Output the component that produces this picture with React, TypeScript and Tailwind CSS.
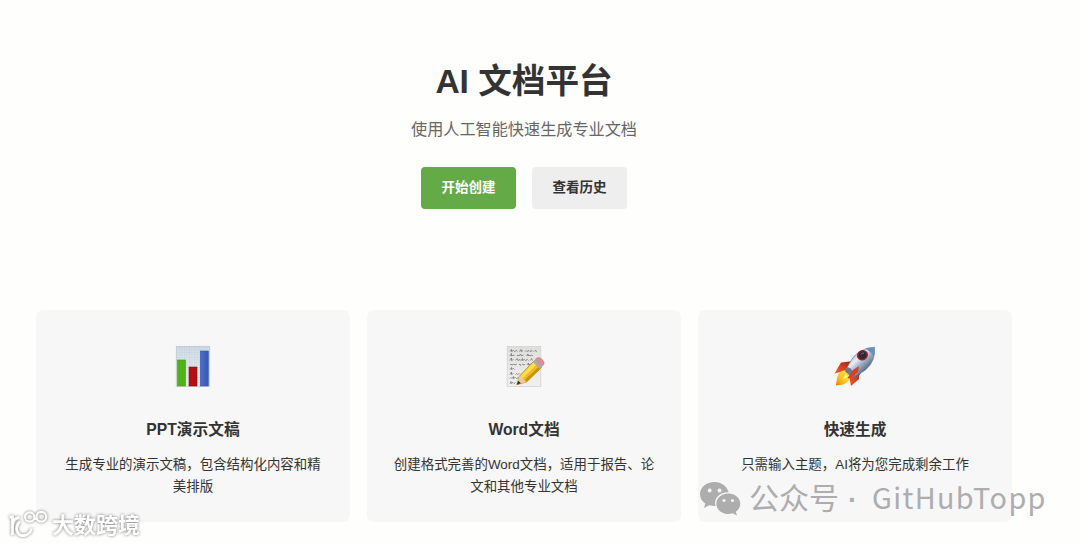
import type { ReactNode } from "react";

function ChartIcon() {
  return (
    <svg viewBox="0 0 48 48" className="size-12">
      <defs>
        <linearGradient id="paper" x1="0" y1="0" x2="0" y2="1">
          <stop offset="0" stopColor="#d3dbe4" />
          <stop offset="1" stopColor="#f1f5fa" />
        </linearGradient>
        <linearGradient id="blueBar" x1="0" y1="0" x2="1" y2="0">
          <stop offset="0" stopColor="#4a70cf" />
          <stop offset="1" stopColor="#3557b8" />
        </linearGradient>
        <pattern id="grid" width="2.5" height="2.5" patternUnits="userSpaceOnUse">
          <path d="M0 0H2.5M0 0V2.5" stroke="#b9cbdc" strokeWidth=".6" />
        </pattern>
      </defs>
      <rect x="7" y="4" width="34" height="40.5" fill="url(#paper)" />
      <rect x="7" y="4" width="34" height="40.5" fill="url(#grid)" />
      <rect x="7.3" y="4.3" width="33.4" height="40" fill="none" stroke="#c3cad2" strokeWidth=".8" />
      <rect x="8.5" y="18" width="8" height="26" fill="#4eb413" stroke="#419b10" strokeWidth=".6" />
      <rect x="20" y="25" width="8" height="19" fill="#b80d12" stroke="#8d0c10" strokeWidth=".6" />
      <rect x="31.3" y="9" width="8" height="35" fill="url(#blueBar)" stroke="#3454a9" strokeWidth=".6" />
    </svg>
  );
}

function MemoIcon() {
  return (
    <svg viewBox="0 0 48 48" className="size-12">
      <defs>
        <linearGradient id="memoPaper" x1="0" y1="0" x2="0" y2="1">
          <stop offset="0" stopColor="#dededc" />
          <stop offset="1" stopColor="#f0f0ee" />
        </linearGradient>
      </defs>
      <rect x="7.2" y="4.4" width="33.6" height="40" fill="url(#memoPaper)" stroke="#d2d2d0" strokeWidth=".8" />
      <g fill="none" stroke="#555" strokeWidth=".6">
        <path d="M10 9.5l1.500-2v2l2-1 1 1 2-1 1 1m2 0 1.500-2v2l2-1m2 1 1-1 1 1 2-1 1 1 2-1 1 1m1 0 1-1 2 1" />
        <path d="M10 14l1.500-2.500v2.500l2-1 1 1m2.500 0 1-1 1 1 1.500-2 1 2 2-1m3 1 1.500-2v2l1-1 1 1 2-1 1 1" />
        <path d="M10 18.500l1.500-2.500v2.500l2-1m2 1 1.500-2 1 2 2-1 1 1 1.500-2v2l2-1 1 1 2-1 1 1m2 0 1-2 1 2" />
        <path d="M10 23l1-1 1 1 2-1 1 1 2-1m2 1 1-1 1 2m1-2 2 1 1-1m2 1 1.500-2v2l2-1" />
        <path d="M10 27.500l1.500-2v2l2-1 1 1m-4.500 5 1.500-2.500v2.500l2-1m2 1 1-1 1 1 2-1" />
        <path d="M10 36.500l1-1 1 1 1.500-2v2l2-1 1 1 2-1m-8.500 6 1-2v2l2-1 1 1 1.500-1" />
      </g>
      <g transform="translate(-1.5 0)">
        <path d="M18.3 42.7L21 34 36 18.500 43 25.500 28 40Z" fill="#f0bd20" stroke="#a67a18" strokeWidth=".7" />
        <path d="M22 34L36.500 19 39 21.500 24.500 36Z" fill="#ffdf48" />
        <path d="M26 38L41.500 23.500 43 25.500 28 40Z" fill="#cc920c" />
        <path d="M18.3 42.7L21 34 24 35 25.500 38 28 40Z" fill="#edc994" />
        <path d="M18.3 42.7L19.600 38.7 22.500 41.300Z" fill="#33302d" />
        <path d="M34.500 20L37 17.300 44 24 41.300 27Z" fill="#a9aba9" />
        <path d="M37 17.300L38.200 16Q40.500 14.500 43.700 17.500T45 22.800L44 24Z" fill="#e58b90" stroke="#c76d76" strokeWidth=".5" />
      </g>
    </svg>
  );
}

function RocketIcon() {
  return (
    <svg viewBox="0 0 48 48" className="size-12">
      <defs>
        <linearGradient id="hull" x1=".2" y1=".15" x2=".8" y2=".8">
          <stop offset="0" stopColor="#718da9" />
          <stop offset=".35" stopColor="#e9f0f6" />
          <stop offset=".6" stopColor="#9aafc6" />
          <stop offset="1" stopColor="#3b4e68" />
        </linearGradient>
        <linearGradient id="flame" x1="1" y1="0" x2="0" y2="1">
          <stop offset="0" stopColor="#fff15b" />
          <stop offset=".6" stopColor="#ffc414" />
          <stop offset="1" stopColor="#f47416" />
        </linearGradient>
        <linearGradient id="fin" x1="0" y1="1" x2="1" y2="0">
          <stop offset="0" stopColor="#ff5d27" />
          <stop offset="1" stopColor="#a51713" />
        </linearGradient>
      </defs>
      <path d="M23 19L10 20.500 3.500 31.500 17 28Z" fill="url(#fin)" />
      <path d="M32 27L28 34 28 37 20 44 18.500 36Z" fill="url(#fin)" />
      <path d="M15 28Q8 29 6.500 34L4.800 43.500Q13 43 16.500 40L20 34Z" fill="url(#flame)" />
      <path d="M15 32L11 38 17 35Z" fill="#fff58b" />
      <path d="M14 29L18.500 21Q26 6 43.500 5.300Q45 19 34.500 28L22 36Z" fill="url(#hull)" stroke="#576c82" strokeWidth=".5" />
      <path d="M34 6.700Q39 5 43.500 5.300Q44.300 10 42.500 15Q40 9 34 6.700Z" fill="#6790bd" />
      <path d="M14 29L16.500 25Q22 27 24.500 34.500L22 36Z" fill="#69788b" />
      <path d="M28 24L22 28 16.500 36 19 36.500 27 30Z" fill="#e13b22" />
      <ellipse cx="31.5" cy="13.2" rx="5.7" ry="5.1" transform="rotate(-35 31.5 13.2)" fill="#a61c20" />
      <ellipse cx="31.5" cy="13.2" rx="3.9" ry="3.5" transform="rotate(-35 31.5 13.2)" fill="#242c37" />
      <path d="M29.500 12.500Q31 10.400 33 11.200" fill="none" stroke="#7a8595" strokeWidth=".8" />
    </svg>
  );
}

function FeatureCard({ icon, title, children }: { icon: ReactNode; title: string; children: ReactNode }) {
  return (
    <article className="flex h-[212px] flex-col items-center rounded-[7px] bg-[#f7f7f8] px-6 pt-8 text-center">
      {icon}
      <h2 className="mt-7 text-[15.7px] leading-6 font-bold">{title}</h2>
      <p className="mt-3 text-[13.45px] leading-[21.5px]">{children}</p>
    </article>
  );
}

function AccountMark() {
  return (
    <div className="absolute top-[478px] left-[699px] flex items-center text-[#adadad]">
      <svg viewBox="0 0 42 36" className="h-9 w-[42px]">
        <path
          d="M15.500 2C7.300 2 1 7.400 1 14.200c0 3.900 2 7.200 5.300 9.400L5 28l5.200-2.700c1.700.5 3.600.8 5.300.8h1C14.300 18 21 12 29.700 12.300 28.300 6.300 22.500 2 15.500 2Z"
          fill="currentColor"
        />
        <path
          d="M29.300 13.500c-6.700 0-12 4.600-12 10.300s5.300 10.200 12 10.200c1.500 0 2.900-.2 4.200-.7l4.500 2.200-1.200-3.800c2.800-1.900 4.500-4.700 4.500-7.900 0-5.700-5.300-10.300-12-10.300Z"
          fill="currentColor"
        />
        <g fill="#f7f7f8">
          <circle cx="10.7" cy="10.5" r="1.9" />
          <circle cx="20.5" cy="10.5" r="1.9" />
          <circle cx="25" cy="20.5" r="1.6" />
          <circle cx="33.5" cy="20.5" r="1.6" />
        </g>
      </svg>
      <div className="ml-[8px] flex items-baseline font-['Noto_Sans_CJK_SC',sans-serif] leading-9 whitespace-nowrap">
        <span className="w-[99px] text-[30px]">公众号</span>
        <span className="w-[24px] font-['Liberation_Sans',sans-serif] text-[28px] font-bold">·</span>
        <span className="text-[28.8px] tracking-[1.35px]">GitHubTopp</span>
      </div>
    </div>
  );
}

function SiteMark() {
  return (
    <div className="absolute top-[507px] left-[8px] flex items-center text-white drop-shadow-[0_0_1.5px_#777]">
      <svg viewBox="0 0 42 32" className="h-8 w-[42px]" fill="none" stroke="currentColor" strokeWidth="2.8">
        <path d="M1.500 9H4.500V27M4.500 17Q5 10 11.500 9.500" />
        <path d="M12 13.500Q7.500 18 9 23Q11 28.500 16.500 27.500Q22 26.500 23.500 20.500" />
        <circle cx="21.7" cy="9" r="4.7" strokeWidth="2.2" />
        <circle cx="33.3" cy="8.7" r="4.9" strokeWidth="2.2" />
        <path d="M25.800 10.500Q28 12 29.500 10" strokeWidth="2" />
      </svg>
      <span className="mb-[2px] ml-[2px] font-['Noto_Sans_CJK_SC',sans-serif] text-[22px] leading-8 font-bold whitespace-nowrap">
        大数跨境
      </span>
    </div>
  );
}

export default function App() {
  return (
    <div className="relative h-[543px] overflow-hidden bg-[#fefefd] font-['Liberation_Sans','Noto_Sans_CJK_SC',sans-serif] text-[#333]">
      <main className="ml-9 w-[976px] pt-[57px]">
        <header className="flex flex-col items-center text-center">
          <h1 className="text-[33.6px] leading-[50px] font-bold">AI 文档平台</h1>
          <p className="mt-[9px] text-[16.15px] leading-[26px] text-[#666]">使用人工智能快速生成专业文档</p>
          <div className="mt-[25px] flex gap-4">
            <button className="h-[42px] w-[95px] rounded-[4px] bg-[#64aa46] text-[13.5px] font-bold text-white">
              开始创建
            </button>
            <button className="h-[42px] w-[95px] rounded-[4px] bg-[#eeeeef] text-[13.5px] font-bold">查看历史</button>
          </div>
        </header>
        <section className="mt-[101px] grid grid-cols-3 gap-[17px]">
          <FeatureCard icon={<ChartIcon />} title="PPT演示文稿">
            生成专业的演示文稿，包含结构化内容和精美排版
          </FeatureCard>
          <FeatureCard icon={<MemoIcon />} title="Word文档">
            创建格式完善的Word文档，适用于报告、论文和其他专业文档
          </FeatureCard>
          <FeatureCard icon={<RocketIcon />} title="快速生成">
            只需输入主题，AI将为您完成剩余工作
          </FeatureCard>
        </section>
      </main>
      <AccountMark />
      <SiteMark />
    </div>
  );
}
